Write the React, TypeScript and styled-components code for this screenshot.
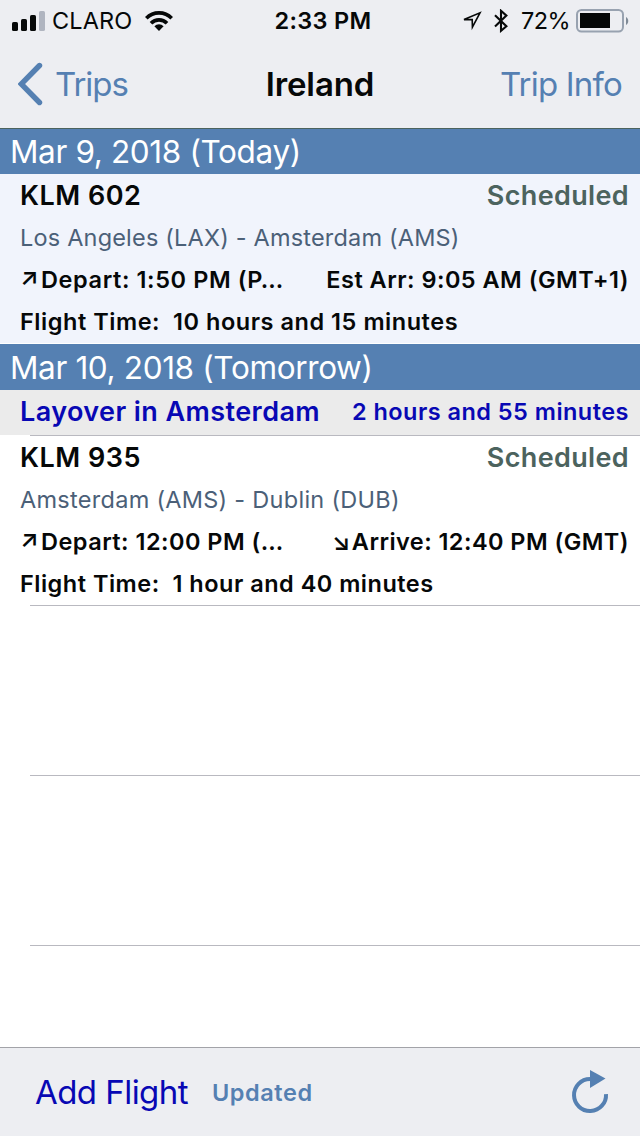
import React from "react";
import styled, { createGlobalStyle } from "styled-components";

const blue = "#5580b2";
const navy = "#0808b4";
const slate = "#4c635e";

const GlobalStyle = createGlobalStyle`
  * { box-sizing: border-box; }
  body { margin: 0; background: #fff; }
`;

const Screen = styled.div`
  width: 640px;
  height: 1136px;
  display: flex;
  flex-direction: column;
  overflow: hidden;
  background: #fff;
  color: #060808;
  font-family: Inter, "Liberation Sans", sans-serif;
  white-space: pre;
`;

const Label = styled.span<{ $ls?: number }>`
  letter-spacing: ${(p) => p.$ls ?? 0}px;
`;

const TopBar = styled.header`
  flex: none;
  height: 129px;
  background: #edeef2;
  border-bottom: 1px solid ${slate};
`;

const StatusBar = styled.div`
  height: 40px;
  display: grid;
  grid-template-columns: 1fr auto 1fr;
  align-items: center;
  padding: 1px 11px 0 12px;
  font-size: 23.5px;
  line-height: 40px;
`;

const StatusGroup = styled.div<{ $end?: boolean }>`
  display: flex;
  align-items: center;
  justify-content: ${(p) => (p.$end ? "flex-end" : "flex-start")};
`;

const Carrier = styled(Label)`
  margin: 0 13px 0 6px;
`;

const Percent = styled(Label)`
  margin: 0 6px 0 13px;
`;

const Clock = styled(Label)`
  font-weight: 600;
  padding-left: 5px;
`;

const NavBar = styled.nav`
  height: 88px;
  display: grid;
  grid-template-columns: 1fr auto 1fr;
  align-items: center;
  padding: 0 18px;
  font-size: 33px;
`;

const BackLink = styled.a`
  display: flex;
  align-items: center;
  gap: 12px;
  color: ${blue};
`;

const Title = styled(Label)`
  font-weight: 600;
`;

const InfoLink = styled(Label)`
  color: ${blue};
  text-align: right;
`;

const DateHeader = styled.h2<{ $first?: boolean }>`
  flex: none;
  margin: 0;
  height: ${(p) => (p.$first ? 45 : 46)}px;
  padding-left: 10px;
  background: ${blue};
  color: #fff;
  font-size: 31.5px;
  font-weight: 400;
  line-height: ${(p) => (p.$first ? 45 : 47)}px;
`;

const Card = styled.section<{ $tint?: boolean }>`
  flex: none;
  height: ${(p) => (p.$tint ? 170 : 169)}px;
  background: ${(p) => (p.$tint ? "#f1f4fc" : "#fff")};
  border-bottom: ${(p) => (p.$tint ? "1px solid #fff" : "0")};
`;

const Row = styled.div`
  display: flex;
  justify-content: space-between;
  align-items: flex-start;
  height: 42px;
  padding: 1px 11px 0 20px;
  font-size: 23.5px;
  font-weight: 600;
  line-height: 42px;
`;

const FlightName = styled(Label)`
  font-size: 27px;
`;

const Status = styled(Label)`
  font-size: 27px;
  color: ${slate};
`;

const Route = styled(Label)`
  font-weight: 400;
  color: #4b6078;
`;

const Time = styled(Label)`
  display: flex;
  align-items: flex-start;
`;

const Arrow = styled.span<{ $down?: boolean }>`
  width: 20px;
  margin-right: ${(p) => (p.$down ? 0 : 1)}px;
  font-size: 24px;
  line-height: ${(p) => (p.$down ? 41 : 36)}px;
  letter-spacing: 0;
`;

const Layover = styled.section`
  flex: none;
  height: 45px;
  background: #ebebeb;
  color: ${navy};
`;

const Rule = styled.hr`
  flex: none;
  width: 610px;
  height: 1px;
  margin: 0 0 0 30px;
  border: 0;
  background: #b9b9c0;
`;

const EmptyRow = styled.div`
  flex: none;
  height: 169px;
`;

const Toolbar = styled.footer`
  flex: none;
  height: 89px;
  margin-top: auto;
  display: flex;
  align-items: center;
  padding: 0 31px 0 35px;
  background: #edeef2;
  border-top: 1px solid #a2a3a8;
`;

const AddFlight = styled(Label)`
  color: ${navy};
  font-size: 33px;
  width: 177px;
`;

const Updated = styled(Label)`
  flex: 1;
  color: ${blue};
  font-size: 23.5px;
  font-weight: 600;
`;

const Signal = () => (
  <svg width="34" height="20" viewBox="0 0 34 20">
    <rect x="0" y="11" width="6" height="9" rx="1.6" fill="#060808" />
    <rect x="9" y="8" width="6" height="12" rx="1.6" fill="#060808" />
    <rect x="18" y="4" width="6" height="16" rx="1.6" fill="#060808" />
    <rect x="27" y="0" width="6" height="20" rx="1.6" fill="#b0b5c0" />
  </svg>
);

const Wifi = () => (
  <svg width="28" height="20" viewBox="0 0 28 20" fill="none" stroke="#060808" strokeWidth="3.7">
    <path d="M1.300 7.200a18 18 0 0 1 25.400 0" />
    <path d="M6 12.200a11.400 11.400 0 0 1 16 0" />
    <path d="M14 20l-4.600-4.800a6.600 6.600 0 0 1 9.200 0z" fill="#060808" stroke="none" />
  </svg>
);

const Location = () => (
  <svg width="20" height="20" viewBox="0 0 20 20" fill="none" stroke="#060808" strokeWidth="1.6">
    <path d="M2 8.600L18 1.800l-7.600 14.400-.2-7.600z" />
  </svg>
);

const BluetoothIcon = styled.svg`
  margin-left: 12px;
`;

const Bluetooth = () => (
  <BluetoothIcon width="14" height="24" viewBox="0 0 14 24" fill="none" stroke="#060808" strokeWidth="2.1">
    <path d="M1 6.200l11.400 11-5.400 4.600V1.800l5.400 4.800L1 17.600" />
  </BluetoothIcon>
);

const Battery = () => (
  <svg width="53" height="24" viewBox="0 0 53 24">
    <rect x="1" y="1" width="46" height="21.5" rx="4.5" fill="none" stroke="#98a2b0" strokeWidth="2" />
    <rect x="4" y="4" width="30" height="15" fill="#060808" />
    <path d="M50 8c3 1.400 3 6.600 0 8z" fill="#7f8a96" />
  </svg>
);

const Chevron = () => (
  <svg width="25" height="44" viewBox="0 0 25 44" fill="none" stroke={blue} strokeWidth="5.4" strokeLinecap="round">
    <path d="M21.500 3.500L3.200 22l18.300 18.500" />
  </svg>
);

const Refresh = () => (
  <svg width="38" height="46" viewBox="0 0 38 46">
    <path d="M19 10A16 16 0 1 0 35 25" fill="none" stroke={blue} strokeWidth="4" />
    <path d="M19 1l15.500 8.500L19 19z" fill={blue} />
  </svg>
);

interface TimeInfo {
  text: string;
  ls: number;
  arrow?: "↗" | "↘";
}

interface Flight {
  name: string;
  route: string;
  routeLs: number;
  depart: TimeInfo;
  arrive: TimeInfo;
  duration: string;
  durationLs: number;
  tint?: boolean;
}

const FlightTime = ({ info }: { info: TimeInfo }) => (
  <Time $ls={info.ls}>
    {info.arrow && <Arrow $down={info.arrow === "↘"}>{info.arrow}</Arrow>}
    {info.text}
  </Time>
);

const FlightCard = ({ f }: { f: Flight }) => (
  <Card $tint={f.tint}>
    <Row>
      <FlightName $ls={0.5}>{f.name}</FlightName>
      <Status $ls={0.35}>Scheduled</Status>
    </Row>
    <Row>
      <Route $ls={f.routeLs}>{f.route}</Route>
    </Row>
    <Row>
      <FlightTime info={f.depart} />
      <FlightTime info={f.arrive} />
    </Row>
    <Row>
      <Label $ls={f.durationLs}>{f.duration}</Label>
    </Row>
  </Card>
);

const outbound: Flight = {
  name: "KLM 602",
  route: "Los Angeles (LAX) - Amsterdam (AMS)",
  routeLs: 0.19,
  depart: { text: "Depart: 1:50 PM (P…", ls: 0.6, arrow: "↗" },
  arrive: { text: "Est Arr: 9:05 AM (GMT+1)", ls: 0.48 },
  duration: "Flight Time:  10 hours and 15 minutes",
  durationLs: 0.54,
  tint: true,
};

const connection: Flight = {
  name: "KLM 935",
  route: "Amsterdam (AMS) - Dublin (DUB)",
  routeLs: 0.28,
  depart: { text: "Depart: 12:00 PM (…", ls: 0.47, arrow: "↗" },
  arrive: { text: "Arrive: 12:40 PM (GMT)", ls: 0.45, arrow: "↘" },
  duration: "Flight Time:  1 hour and 40 minutes",
  durationLs: 0.5,
};

export default function App() {
  return (
    <Screen>
      <GlobalStyle />
      <TopBar>
        <StatusBar>
          <StatusGroup>
            <Signal />
            <Carrier $ls={0.1}>CLARO</Carrier>
            <Wifi />
          </StatusGroup>
          <Clock $ls={0.3}>2:33 PM</Clock>
          <StatusGroup $end>
            <Location />
            <Bluetooth />
            <Percent $ls={-0.6}>72%</Percent>
            <Battery />
          </StatusGroup>
        </StatusBar>
        <NavBar>
          <BackLink>
            <Chevron />
            <Label $ls={-1}>Trips</Label>
          </BackLink>
          <Title $ls={-0.1}>Ireland</Title>
          <InfoLink $ls={-0.8}>Trip Info</InfoLink>
        </NavBar>
      </TopBar>
      <DateHeader $first>
        <Label $ls={-0.36}>Mar 9, 2018 (Today)</Label>
      </DateHeader>
      <FlightCard f={outbound} />
      <DateHeader>
        <Label $ls={-0.36}>Mar 10, 2018 (Tomorrow)</Label>
      </DateHeader>
      <Layover>
        <Row>
          <FlightName $ls={0.42}>Layover in Amsterdam</FlightName>
          <Label $ls={0.47}>2 hours and 55 minutes</Label>
        </Row>
      </Layover>
      <Rule />
      <FlightCard f={connection} />
      <Rule />
      <EmptyRow />
      <Rule />
      <EmptyRow />
      <Rule />
      <Toolbar>
        <AddFlight $ls={-0.55}>Add Flight</AddFlight>
        <Updated $ls={0.55}>Updated</Updated>
        <Refresh />
      </Toolbar>
    </Screen>
  );
}
